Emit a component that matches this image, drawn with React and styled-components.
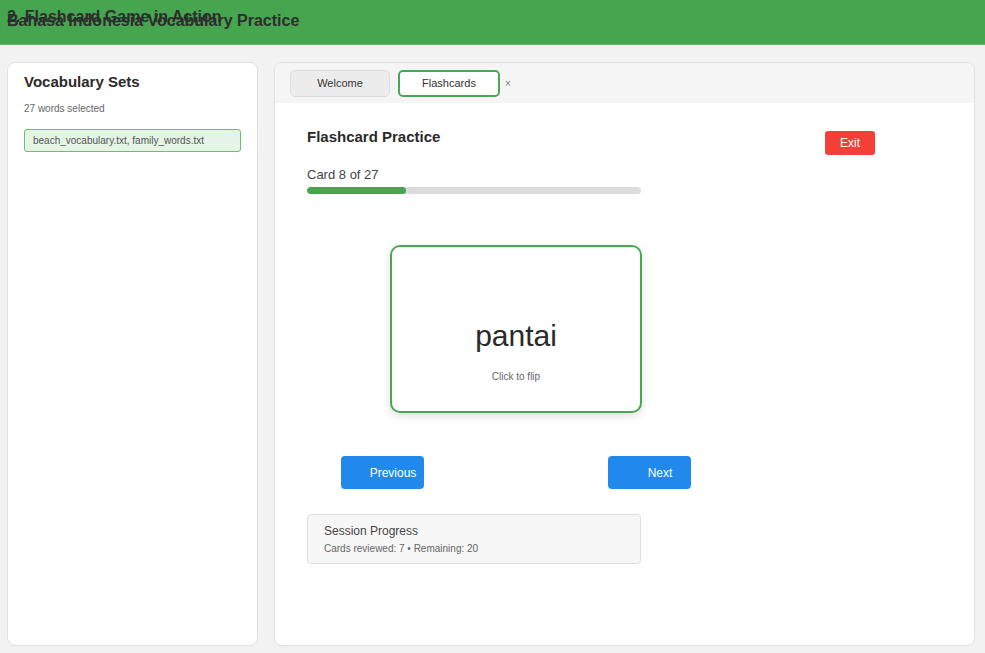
import React from 'react';
import styled, { createGlobalStyle } from 'styled-components';

const GlobalStyle = createGlobalStyle`
  html, body {
    margin: 0;
    padding: 0;
    background: #f2f2f2;
    font-family: "Liberation Sans", Arial, sans-serif;
    color: #333;
  }
  * { box-sizing: border-box; }
`;

const Page = styled.div`
  width: 985px;
  height: 653px;
  display: flex;
  flex-direction: column;
  overflow: hidden;
`;

const Header = styled.header`
  position: relative;
  height: 45px;
  flex-shrink: 0;
  background: #46a54f;
  border-bottom: 1px solid #62b96a;
  padding: 12px 7px 0;
`;

const HeaderTitle = styled.h1`
  margin: 0;
  font-size: 16px;
  line-height: 18px;
  font-weight: bold;
  color: #2d2d2d;
`;

const OverlayTitle = styled(HeaderTitle)`
  position: absolute;
  top: 8px;
  left: 7px;
`;

const Body = styled.div`
  flex: 1;
  display: flex;
  gap: 16px;
  padding: 17px 10px 7px 7px;
  min-height: 0;
`;

const Panel = styled.div`
  background: #fff;
  border: 1px solid #e0e0e0;
  border-radius: 8px;
  overflow: hidden;
`;

const Sidebar = styled(Panel)`
  width: 251px;
  flex-shrink: 0;
  padding: 10px 16px;
`;

const SideTitle = styled.h2`
  margin: 0;
  font-size: 15px;
  line-height: 18px;
  font-weight: bold;
  color: #2a2a2a;
`;

const SideMeta = styled.div`
  margin-top: 12px;
  font-size: 10px;
  line-height: 12px;
  color: #666;
`;

const Chip = styled.div`
  margin-top: 14px;
  height: 23px;
  display: flex;
  align-items: center;
  padding: 0 8px;
  background: #e5f4e5;
  border: 1px solid #6cbf70;
  border-radius: 3px;
  font-size: 10px;
  color: #555;
`;

const Main = styled(Panel)`
  flex: 1;
  display: flex;
  flex-direction: column;
`;

const TabBar = styled.div`
  height: 40px;
  flex-shrink: 0;
  background: #f5f5f5;
  display: flex;
  align-items: center;
  gap: 8px;
  padding: 0 15px;
`;

const Tab = styled.div`
  width: ${({ active }) => (active ? 102 : 100)}px;
  height: 27px;
  display: flex;
  align-items: center;
  justify-content: center;
  font-size: 11px;
  color: #333;
  border-radius: 5px;
  background: ${({ active }) => (active ? '#fff' : '#ececec')};
  border: ${({ active }) => (active ? '2px solid #4aa852' : '1px solid #dcdcdc')};
`;

const Close = styled.span`
  font-size: 10px;
  color: #777;
  margin-left: -3px;
`;

const Content = styled.div`
  padding: 25px 32px 0;
  display: flex;
  flex-direction: column;
`;

const TitleRow = styled.div`
  width: 568px;
  display: flex;
  justify-content: space-between;
  align-items: flex-start;
`;

const PracticeTitle = styled.h2`
  margin: 0;
  font-size: 15px;
  line-height: 18px;
  font-weight: bold;
  color: #2a2a2a;
`;

const ExitButton = styled.button`
  margin-top: 3px;
  width: 50px;
  height: 24px;
  border: none;
  border-radius: 3px;
  background: #f33f38;
  color: #fff;
  font-family: inherit;
  font-size: 12px;
  padding: 0;
`;

const CardCount = styled.div`
  margin-top: 12px;
  font-size: 13px;
  line-height: 15px;
  color: #444;
`;

const Track = styled.div`
  margin-top: 5px;
  width: 334px;
  height: 7px;
  border-radius: 4px;
  background: #dcdcdc;
  overflow: hidden;
`;

const Fill = styled.div`
  height: 100%;
  background: #46a54f;
  border-radius: 4px;
`;

const Stage = styled.div`
  width: 418px;
  display: flex;
  flex-direction: column;
  align-items: center;
`;

const Card = styled.div`
  margin-top: 51px;
  width: 252px;
  height: 168px;
  border: 2px solid #4aa852;
  border-radius: 10px;
  background: #fff;
  box-shadow: 0 3px 10px rgba(0, 0, 0, 0.12);
  display: flex;
  flex-direction: column;
  align-items: center;
  padding-top: 72px;
`;

const Word = styled.div`
  font-size: 30px;
  line-height: 34px;
  color: #2a2a2a;
`;

const Hint = styled.div`
  margin-top: 18px;
  font-size: 10px;
  line-height: 12px;
  color: #666;
`;

const NavRow = styled.div`
  margin-top: 43px;
  width: 100%;
  padding: 0 34px;
  display: flex;
  justify-content: space-between;
`;

const NavButton = styled.button`
  width: 83px;
  height: 33px;
  border: none;
  border-radius: 4px;
  background: #2189ec;
  color: #fff;
  font-family: inherit;
  font-size: 12px;
  padding: 0 0 0 21px;
  text-align: center;
`;

const SessionBox = styled.div`
  margin-top: 25px;
  width: 334px;
  height: 50px;
  background: #f7f7f7;
  border: 1px solid #dddddd;
  border-radius: 4px;
  padding: 9px 16px 0;
`;

const SessionTitle = styled.div`
  font-size: 12px;
  line-height: 14px;
  color: #444;
`;

const SessionStats = styled.div`
  margin-top: 5px;
  font-size: 10px;
  line-height: 12px;
  color: #666;
`;

export default function App() {
  const current = 8;
  const total = 27;
  return (
    <Page>
      <GlobalStyle />
      <Header>
        <OverlayTitle as="div">2. Flashcard Game in Action</OverlayTitle>
        <HeaderTitle>Bahasa Indonesia Vocabulary Practice</HeaderTitle>
      </Header>
      <Body>
        <Sidebar>
          <SideTitle>Vocabulary Sets</SideTitle>
          <SideMeta>27 words selected</SideMeta>
          <Chip>beach_vocabulary.txt, family_words.txt</Chip>
        </Sidebar>
        <Main>
          <TabBar>
            <Tab>Welcome</Tab>
            <Tab active>Flashcards</Tab>
            <Close>×</Close>
          </TabBar>
          <Content>
            <TitleRow>
              <PracticeTitle>Flashcard Practice</PracticeTitle>
              <ExitButton>Exit</ExitButton>
            </TitleRow>
            <CardCount>
              Card {current} of {total}
            </CardCount>
            <Track>
              <Fill style={{ width: `${(current / total) * 100}%` }} />
            </Track>
            <Stage>
              <Card>
                <Word>pantai</Word>
                <Hint>Click to flip</Hint>
              </Card>
              <NavRow>
                <NavButton>Previous</NavButton>
                <NavButton>Next</NavButton>
              </NavRow>
            </Stage>
            <SessionBox>
              <SessionTitle>Session Progress</SessionTitle>
              <SessionStats>Cards reviewed: 7 • Remaining: 20</SessionStats>
            </SessionBox>
          </Content>
        </Main>
      </Body>
    </Page>
  );
}
